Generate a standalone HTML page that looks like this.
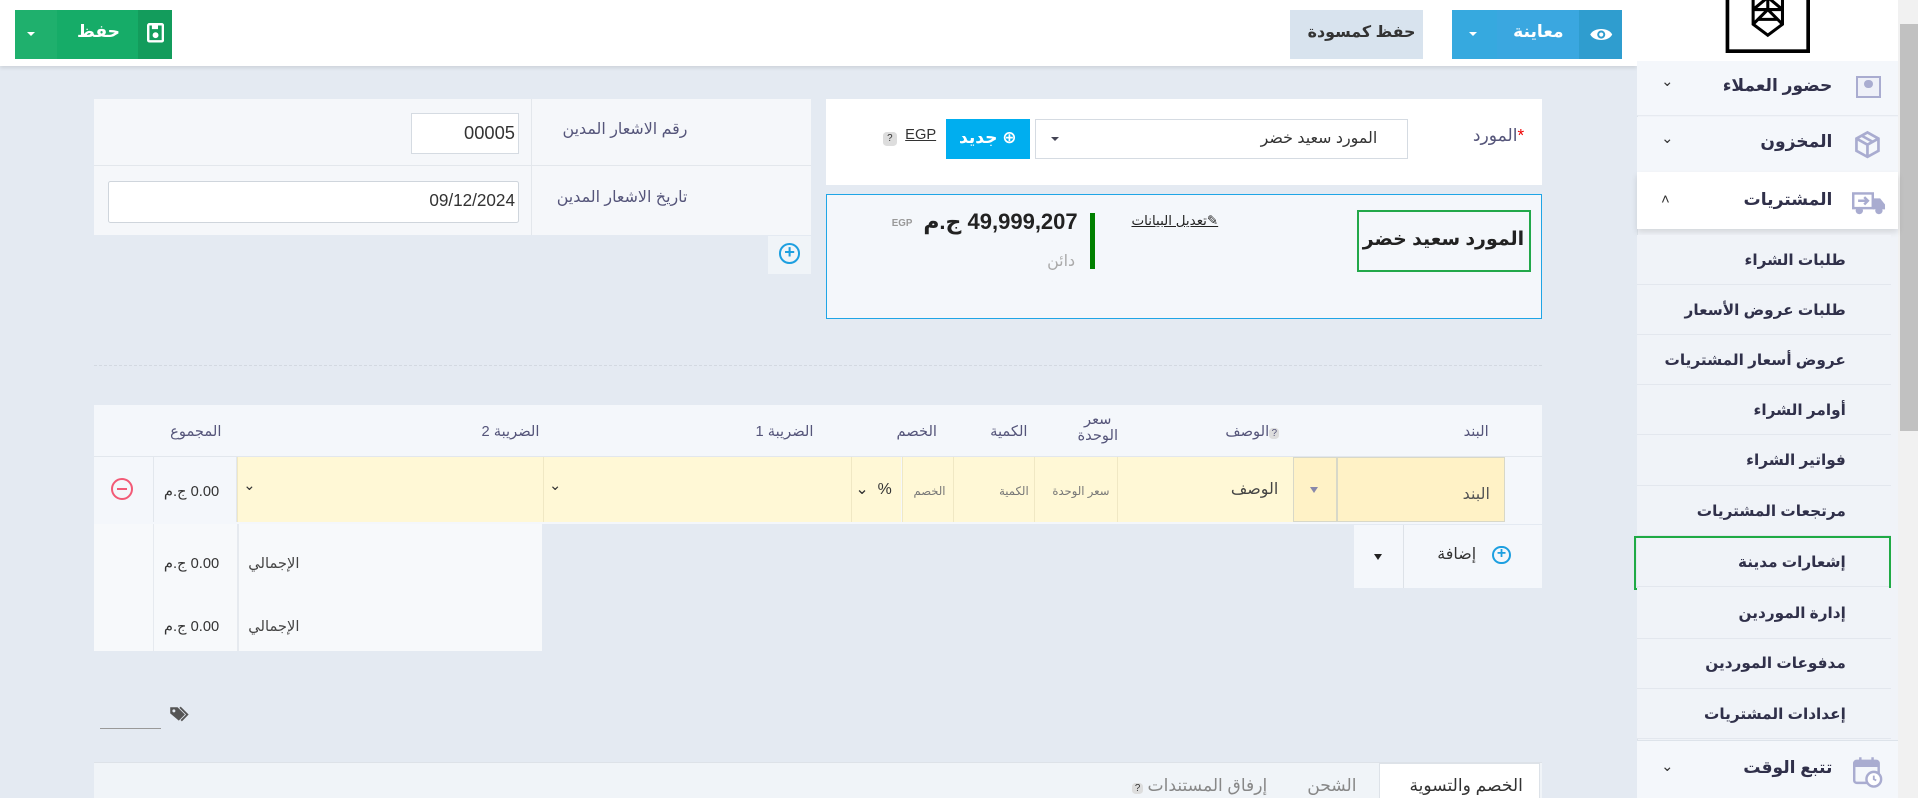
<!DOCTYPE html>
<html><head><meta charset="utf-8"><style>
*{box-sizing:border-box;margin:0;padding:0}
html,body{width:1918px;height:798px;overflow:hidden;background:#e4eaf2}
#w{zoom:1.22321;width:1568px;height:652px;position:relative;font-family:"Liberation Sans","DejaVu Sans",sans-serif;color:#4b4b6b;font-size:13px}
.a{position:absolute}
.t{position:absolute;white-space:nowrap;direction:rtl}
.sb{background:#f0f3f8;border-bottom:1px solid #e3e7ee;left:1338px;width:208px;height:41px}
.sb span{position:absolute;right:37px;top:13px;font-size:12.5px;font-weight:bold;color:#30304a;direction:rtl}
.cell{position:absolute;top:374px;height:53px;background:#fff8d6;border-left:1px solid #f0e8c4}
.ph{position:absolute;direction:rtl;white-space:nowrap;font-size:9.5px;color:#777;top:22px}
.hd{position:absolute;top:346px;direction:rtl;white-space:nowrap;font-size:12px;color:#55557a}
</style></head><body><div id="w">
<div class="a" style="left:0;top:0;width:1338px;height:54px;background:#fff;box-shadow:0 2px 3px rgba(0,0,0,.1)"></div>
<div class="a" style="left:12px;top:8px;width:35px;height:40px;background:#1fb06d"></div>
<div class="a" style="left:22px;top:26px;border:4px solid transparent;border-top:4px solid #fff;border-bottom:0"></div>
<div class="a" style="left:47px;top:8px;width:66px;height:40px;background:#16ac68"></div>
<div class="t" style="left:63px;top:18px;color:#fff;font-weight:bold;font-size:14px">حفظ</div>
<div class="a" style="left:113px;top:8px;width:28px;height:40px;background:#139c5c"></div>
<svg class="a" style="left:120px;top:19px" width="14" height="16" viewBox="0 0 14 16"><rect x="1" y="1" width="12" height="14" rx="1" fill="none" stroke="#fff" stroke-width="2"/><rect x="4" y="2" width="5" height="3" fill="#fff"/><circle cx="7" cy="10" r="2.4" fill="#fff"/></svg>
<div class="a" style="left:1055px;top:8px;width:108px;height:40px;background:#d8e3ee"></div>
<div class="t" style="left:1069px;top:18px;font-weight:bold;font-size:13px;color:#333">حفظ كمسودة</div>
<div class="a" style="left:1187px;top:8px;width:37px;height:40px;background:#36a9df"></div>
<div class="a" style="left:1201px;top:26px;border:4px solid transparent;border-top:4px solid #fff;border-bottom:0"></div>
<div class="a" style="left:1224px;top:8px;width:67px;height:40px;background:#3aa7e0"></div>
<div class="t" style="left:1237px;top:18px;color:#fff;font-weight:bold;font-size:14px">معاينة</div>
<div class="a" style="left:1291px;top:8px;width:35px;height:40px;background:#2f9dcf"></div>
<svg class="a" style="left:1299px;top:21px" width="20" height="14" viewBox="0 0 20 14"><path d="M1 7C4 1 16 1 19 7C16 13 4 13 1 7Z" fill="#fff"/><circle cx="10" cy="7" r="3.3" fill="#2f9dcf"/><circle cx="10" cy="7" r="1.7" fill="#fff"/></svg>
<div class="a" style="left:1338px;top:0;width:214px;height:652px;background:#f0f3f8;border-left:1px solid #dde3ea"></div>
<div class="a" style="left:1338px;top:0;width:214px;height:50px;background:#fff"></div>
<svg class="a" style="left:1410px;top:-8px" width="70" height="53" viewBox="0 0 70 53"><rect x="2" y="2" width="66" height="48" fill="#fff" stroke="#000" stroke-width="3"/><path d="M23 2L23 28L35 37L47 28L47 2M23 16L47 16M23 16L35 6L47 16M23 28L35 16L47 28M35 16L35 6M27 24L43 24" fill="none" stroke="#000" stroke-width="2.5"/></svg>
<div class="a" style="left:1552px;top:0;width:16px;height:652px;background:#f1f1f1"></div>
<div class="a" style="left:1553px;top:20px;width:15px;height:332px;background:#c1c1c1"></div>
<div class="a" style="left:1338px;top:50px;width:214px;height:45px;background:#f4f7fb;border-bottom:1px solid #e6eaf0"></div>
<div class="t" style="right:70px;top:62px;font-weight:bold;font-size:14px;color:#30304a">حضور العملاء</div>
<div class="a" style="left:1517px;top:62px;width:21px;height:18px;border:2px solid #a9acd0;background:#eef0f8"></div><div class="a" style="left:1524px;top:65px;width:7px;height:7px;border-radius:50%;background:#a9acd0"></div>
<div class="t" style="left:1358px;top:60px;font-size:12px;color:#333">⌄</div>
<div class="a" style="left:1338px;top:96px;width:214px;height:45px;background:#f4f7fb"></div>
<div class="t" style="right:70px;top:108px;font-weight:bold;font-size:14px;color:#30304a">المخزون</div>
<svg class="a" style="left:1516px;top:106px" width="22" height="24" viewBox="0 0 22 24"><path d="M11 2L20 7L20 17L11 22L2 17L2 7Z M2 7L11 12L20 7 M11 12L11 22 M6 4.5L15 9.5" fill="none" stroke="#a9acd0" stroke-width="2.2"/></svg>
<div class="t" style="left:1358px;top:106px;font-size:12px;color:#333">⌄</div>
<div class="a" style="left:1338px;top:141px;width:214px;height:46px;background:#fff;box-shadow:0 3px 5px rgba(0,0,0,.12)"></div>
<div class="t" style="right:70px;top:155px;font-weight:bold;font-size:14px;color:#30304a">المشتريات</div>
<svg class="a" style="left:1514px;top:156px" width="28" height="20" viewBox="0 0 28 20"><rect x="1" y="2" width="16" height="12" fill="none" stroke="#a9acd0" stroke-width="2"/><path d="M17 6L23 6L27 11L27 15L17 15Z" fill="#a9acd0"/><circle cx="6" cy="16" r="3" fill="#a9acd0"/><circle cx="22" cy="16" r="3" fill="#a9acd0"/><path d="M5 8L13 8M10 5L13 8L10 11" stroke="#a9acd0" stroke-width="2" fill="none"/></svg>
<div class="t" style="left:1358px;top:157px;font-size:12px;color:#333">˄</div>
<div class="a sb" style="top:192px"><span>طلبات الشراء</span></div>
<div class="a sb" style="top:233px"><span>طلبات عروض الأسعار</span></div>
<div class="a sb" style="top:274px"><span>عروض أسعار المشتريات</span></div>
<div class="a sb" style="top:315px"><span>أوامر الشراء</span></div>
<div class="a sb" style="top:356px"><span>فواتير الشراء</span></div>
<div class="a sb" style="top:397px"><span>مرتجعات المشتريات</span></div>
<div class="a sb" style="top:439px"><span>إشعارات مدينة</span></div>
<div class="a" style="left:1336px;top:438px;width:210px;height:44px;border:2px solid #1faa45"></div>
<div class="a sb" style="top:481px"><span>إدارة الموردين</span></div>
<div class="a sb" style="top:522px"><span>مدفوعات الموردين</span></div>
<div class="a sb" style="top:563px"><span>إعدادات المشتريات</span></div>
<div class="a" style="left:1338px;top:605px;width:214px;height:47px;background:#f4f7fb;border-top:1px solid #dde3ea"></div>
<div class="t" style="right:70px;top:620px;font-weight:bold;font-size:14px;color:#30304a">تتبع الوقت</div>
<svg class="a" style="left:1515px;top:618px" width="24" height="26" viewBox="0 0 24 26"><rect x="1" y="4" width="20" height="18" rx="2" fill="none" stroke="#a9acd0" stroke-width="2"/><rect x="1" y="4" width="20" height="5" fill="#a9acd0"/><path d="M6 1L6 6M16 1L16 6" stroke="#a9acd0" stroke-width="2"/><circle cx="17" cy="19" r="6" fill="#fff" stroke="#a9acd0" stroke-width="2"/><path d="M17 16L17 19L19 20" stroke="#a9acd0" stroke-width="1.5" fill="none"/></svg>
<div class="t" style="left:1358px;top:620px;font-size:12px;color:#333">⌄</div>
<div class="a" style="left:77px;top:81px;width:586px;height:111px;background:#f5f7fa"></div>
<div class="a" style="left:434px;top:81px;width:1px;height:111px;background:#e3e7ec"></div>
<div class="a" style="left:77px;top:135px;width:586px;height:1px;background:#e3e7ec"></div>
<div class="t" style="right:1006px;top:97px;font-size:13px;color:#55557a">رقم الاشعار المدين</div>
<div class="t" style="right:1006px;top:153px;font-size:13px;color:#55557a">تاريخ الاشعار المدين</div>
<div class="a" style="left:336px;top:92px;width:88px;height:34px;background:#fff;border:1px solid #d5dbe2"></div>
<div class="t" style="right:1147px;top:100px;font-size:15px;color:#333">00005</div>
<div class="a" style="left:88px;top:148px;width:336px;height:34px;background:#fff;border:1px solid #cfd5dc;border-radius:2px"></div>
<div class="t" style="right:1147px;top:156px;font-size:14px;color:#333">09/12/2024</div>
<div class="a" style="left:628px;top:193px;width:35px;height:31px;background:#f0f4f8"></div>
<div class="a" style="left:637px;top:199px;width:17px;height:17px;border:2px solid #1d9fe0;border-radius:50%;color:#1d9fe0;font-size:15px;line-height:12px;text-align:center;font-weight:bold">+</div>
<div class="a" style="left:675px;top:81px;width:586px;height:70px;background:#fff"></div>
<div class="t" style="right:322px;top:103px;font-size:14px;color:#55557a"><span style="color:#e00">*</span>المورد</div>
<div class="a" style="left:846px;top:97px;width:305px;height:33px;background:#fff;border:1px solid #d5dbe2"></div>
<div class="t" style="right:442px;top:105px;font-size:13px;color:#333">المورد سعيد خضر</div>
<div class="a" style="left:859px;top:112px;border:4px solid transparent;border-top:4px solid #445;border-bottom:0"></div>
<div class="a" style="left:773px;top:97px;width:69px;height:33px;background:#00aeef"></div>
<div class="t" style="left:784px;top:105px;color:#fff;font-weight:bold;font-size:14px">⊕ جديد</div>
<div class="t" style="left:740px;top:104px;font-size:12px;color:#333;text-decoration:underline">EGP</div>
<div class="a" style="left:722px;top:108px;width:11px;height:11px;background:#ddd;border-radius:3px;font-size:8px;text-align:center;line-height:11px;color:#333">?</div>
<div class="a" style="left:675px;top:159px;width:586px;height:102px;background:#f4f7fb;border:1px solid #1fa5e6"></div>
<div class="a" style="left:1109px;top:172px;width:143px;height:50px;border:2px solid #22a84a"></div>
<div class="t" style="right:322px;top:186px;font-weight:bold;font-size:15.5px;color:#222">المورد سعيد خضر</div>
<div class="t" style="left:925px;top:174px;font-size:11px;color:#222;text-decoration:underline">✎تعديل البيانات</div>
<div class="a" style="left:891px;top:174px;width:4px;height:46px;background:#008000"></div>
<div class="t" style="right:687px;top:171px;font-weight:bold;font-size:18px;color:#222">49,999,207 ج.م</div>
<div class="t" style="left:729px;top:178px;font-size:8px;color:#999;font-weight:bold">EGP</div>
<div class="t" style="left:856px;top:205px;font-size:13px;color:#aaa">دائن</div>
<div class="a" style="left:77px;top:298px;width:1184px;border-top:1px dashed #d3d9e1"></div>
<div class="a" style="left:77px;top:331px;width:1184px;height:43px;background:#f4f7fb;border-bottom:1px solid #e2e7ed"></div>
<div class="hd" style="right:351px">البند</div>
<div class="hd" style="right:522px"><span style="background:#ddd;border-radius:3px;font-size:8px;padding:0 2px">?</span>الوصف</div>
<div class="hd" style="right:654px;top:338px;line-height:13px;text-align:center">سعر<br>الوحدة</div>
<div class="hd" style="right:728px">الكمية</div>
<div class="hd" style="right:802px">الخصم</div>
<div class="hd" style="right:903px">الضريبة 1</div>
<div class="hd" style="right:1127px">الضريبة 2</div>
<div class="hd" style="right:1387px">المجموع</div>
<div class="a" style="left:77px;top:374px;width:1184px;height:54px;background:#f4f7fb"></div>
<div class="a" style="left:1093px;top:374px;width:137px;height:53px;background:#fff2c6;border:1px solid #d8d8c8"></div>
<div class="t" style="right:350px;top:396px;font-size:13px;color:#555">البند</div>
<div class="a" style="left:1057px;top:374px;width:36px;height:53px;background:#fff2c6;border:1px solid #d8d8c8"></div>
<div class="a" style="left:1071px;top:398px;border:4px solid transparent;border-top:5px solid #8888aa;border-bottom:0"></div>
<div class="cell" style="left:913px;width:144px"><div class="ph" style="right:12px;top:18px;font-size:13px;color:#444">الوصف</div></div>
<div class="cell" style="left:845px;width:68px"><div class="ph" style="right:6px">سعر الوحدة</div></div>
<div class="cell" style="left:779px;width:66px"><div class="ph" style="right:4px">الكمية</div></div>
<div class="cell" style="left:737px;width:42px"><div class="ph" style="right:6px">الخصم</div></div>
<div class="cell" style="left:696px;width:41px"><div class="ph" style="right:8px;top:18px;font-size:13px;color:#333">% &nbsp;⌄</div></div>
<div class="cell" style="left:444px;width:252px"><div class="ph" style="left:4px;top:16px;font-size:12px;color:#333">⌄</div></div>
<div class="cell" style="left:194px;width:250px"><div class="ph" style="left:4px;top:16px;font-size:12px;color:#333">⌄</div></div>
<div class="a" style="left:125px;top:374px;width:69px;height:53px;border-left:1px solid #e2e7ed;border-right:1px solid #e2e7ed"></div>
<div class="t" style="left:134px;top:395px;font-size:12px;color:#333">0.00 ج.م</div>
<div class="a" style="left:91px;top:391px;width:18px;height:18px;border:2px solid #f25a76;border-radius:50%"></div><div class="a" style="left:96px;top:399px;width:8px;height:2px;background:#f25a76"></div>
<div class="a" style="left:77px;top:428px;width:366px;height:104px;background:#f7f9fb"></div>
<div class="a" style="left:125px;top:428px;width:1px;height:104px;background:#e6eaef"></div>
<div class="a" style="left:194px;top:428px;width:1px;height:104px;background:#e6eaef"></div>
<div class="t" style="left:203px;top:454px;font-size:12px;color:#444">الإجمالي</div>
<div class="t" style="left:134px;top:454px;font-size:12px;color:#333">0.00 ج.م</div>
<div class="t" style="left:203px;top:505px;font-size:12px;color:#444">الإجمالي</div>
<div class="t" style="left:134px;top:505px;font-size:12px;color:#333">0.00 ج.م</div>
<div class="a" style="left:1107px;top:429px;width:154px;height:52px;background:#f4f7fb"></div>
<div class="a" style="left:1147px;top:429px;width:1px;height:52px;background:#dde2e8"></div>
<div class="a" style="left:1123px;top:453px;border:4px solid transparent;border-top:5px solid #222;border-bottom:0"></div>
<div class="t" style="left:1175px;top:445px;font-size:13px;color:#333">إضافة</div>
<div class="a" style="left:1220px;top:446px;width:15px;height:15px;border:2px solid #1d9fe0;border-radius:50%;color:#1d9fe0;font-size:13px;line-height:10px;text-align:center;font-weight:bold">+</div>
<svg class="a" style="left:138px;top:577px" width="17" height="14" viewBox="0 0 17 14"><path d="M1 1L7 1L13 7L8 12L1 6Z" fill="#555"/><path d="M9 1L15 7L10 12" fill="none" stroke="#555" stroke-width="1.5"/><circle cx="4" cy="4" r="1.2" fill="#e4eaf2"/></svg>
<div class="a" style="left:82px;top:595px;width:50px;height:1px;background:#999"></div>
<div class="a" style="left:77px;top:623px;width:1184px;height:29px;background:#f0f4f8;border-top:1px solid #dde2e8"></div>
<div class="a" style="left:1127px;top:624px;width:132px;height:28px;background:#fff;border:1px solid #dde2e8;border-bottom:0"></div>
<div class="t" style="right:323px;top:634px;font-size:14px;color:#333">الخصم والتسوية</div>
<div class="t" style="right:459px;top:634px;font-size:14px;color:#888">الشحن</div>
<div class="t" style="right:532px;top:634px;font-size:14px;color:#888">إرفاق المستندات <span style="background:#ddd;border-radius:3px;font-size:8px;padding:0 2px;color:#333">?</span></div>
</div></body></html>
